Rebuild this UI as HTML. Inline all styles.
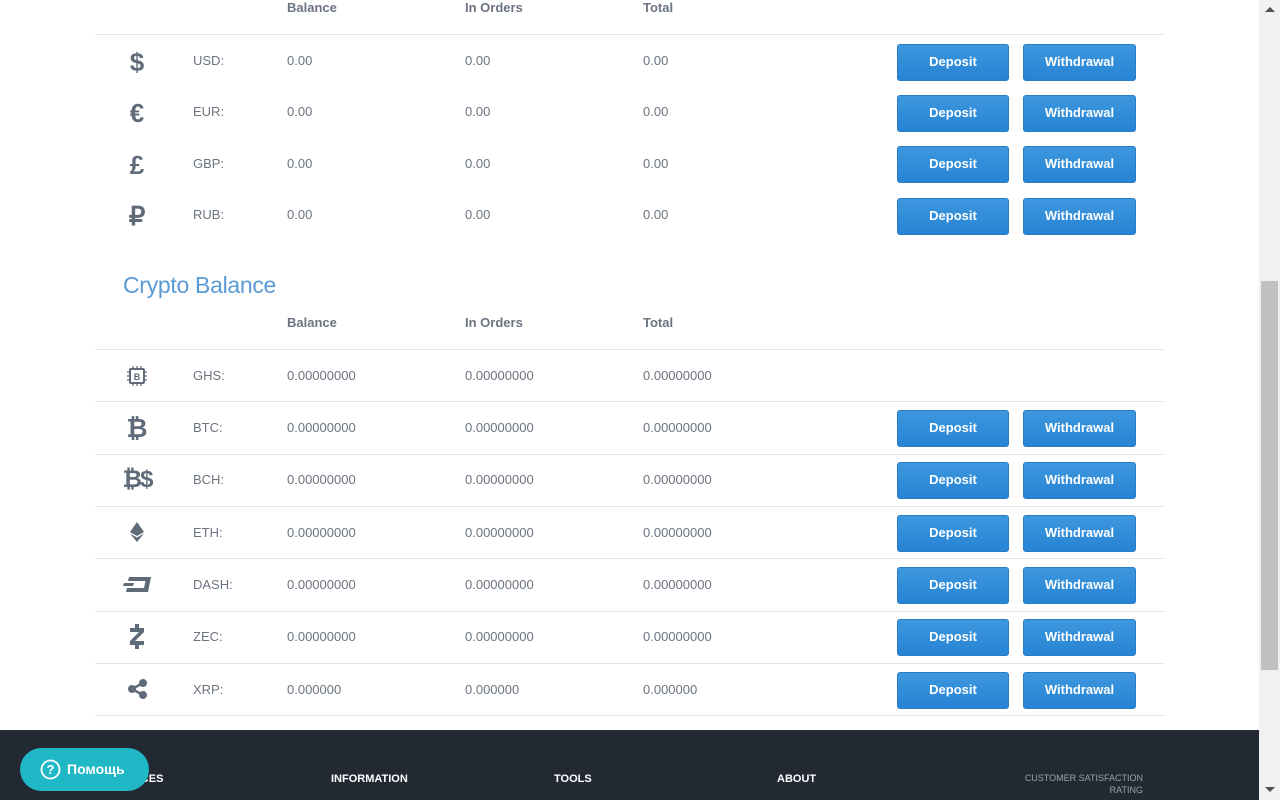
<!DOCTYPE html>
<html><head><meta charset="utf-8"><style>
*{margin:0;padding:0;box-sizing:border-box}
body{width:1280px;height:800px;overflow:hidden;background:#fff;font-family:"Liberation Sans",Arial,sans-serif;position:relative;color:#5b6573}
.t{position:absolute;font-size:13px;color:#6b7480;line-height:16px}
.h{position:absolute;font-size:13px;font-weight:bold;color:#6b7480}
.line{position:absolute;left:95px;width:1069px;height:1px;background:#e2e4e6}
.btn{position:absolute;height:37px;border-radius:3px;background:linear-gradient(#3d98de,#2783d4);border:1px solid #2a7cc4;color:#fff;font-weight:bold;font-size:13px;text-align:center;line-height:34px}
.ic{position:absolute;left:122px;width:30px;text-align:center;color:#5f6b78;font-weight:bold;font-size:26px;line-height:26px}
</style></head><body>
<div class="h" style="left:287px;top:0">Balance</div>
<div class="h" style="left:465px;top:0">In Orders</div>
<div class="h" style="left:643px;top:0">Total</div>
<div class="line" style="top:34px"></div>

<div class="ic" style="top:49px">$</div>
<div class="ic" style="top:100px">€</div>
<div class="ic" style="top:152px">£</div>
<div class="ic" style="top:203px">₽</div>
<div class="t" style="left:193px;top:53px">USD:</div><div class="t" style="left:287px;top:53px">0.00</div><div class="t" style="left:465px;top:53px">0.00</div><div class="t" style="left:643px;top:53px">0.00</div>
<div class="t" style="left:193px;top:104px">EUR:</div><div class="t" style="left:287px;top:104px">0.00</div><div class="t" style="left:465px;top:104px">0.00</div><div class="t" style="left:643px;top:104px">0.00</div>
<div class="t" style="left:193px;top:156px">GBP:</div><div class="t" style="left:287px;top:156px">0.00</div><div class="t" style="left:465px;top:156px">0.00</div><div class="t" style="left:643px;top:156px">0.00</div>
<div class="t" style="left:193px;top:207px">RUB:</div><div class="t" style="left:287px;top:207px">0.00</div><div class="t" style="left:465px;top:207px">0.00</div><div class="t" style="left:643px;top:207px">0.00</div>
<div class="btn" style="left:897px;top:44px;width:112px">Deposit</div><div class="btn" style="left:1023px;top:44px;width:113px">Withdrawal</div>
<div class="btn" style="left:897px;top:95px;width:112px">Deposit</div><div class="btn" style="left:1023px;top:95px;width:113px">Withdrawal</div>
<div class="btn" style="left:897px;top:146px;width:112px">Deposit</div><div class="btn" style="left:1023px;top:146px;width:113px">Withdrawal</div>
<div class="btn" style="left:897px;top:198px;width:112px">Deposit</div><div class="btn" style="left:1023px;top:198px;width:113px">Withdrawal</div>

<div style="position:absolute;left:123px;top:272px;font-size:23px;color:#5a9ad4;letter-spacing:-0.3px">Crypto Balance</div>
<div class="h" style="left:287px;top:315px">Balance</div>
<div class="h" style="left:465px;top:315px">In Orders</div>
<div class="h" style="left:643px;top:315px">Total</div>
<div class="line" style="top:349px"></div>

<svg style="position:absolute;left:126px;top:365px" width="22" height="22" viewBox="0 0 22 22"><rect x="4" y="4" width="14" height="14" rx="1" fill="none" stroke="#5f6b78" stroke-width="2"/><text x="11" y="15" text-anchor="middle" font-size="9" font-weight="bold" fill="#5f6b78" font-family="Liberation Sans">B</text><g stroke="#5f6b78" stroke-width="1.2"><path d="M7 1v2M11 1v2M15 1v2M7 19v2M11 19v2M15 19v2M1 7h2M1 11h2M1 15h2M19 7h2M19 11h2M19 15h2"/></g></svg>
<div class="ic" style="top:415px">₿</div>
<div class="ic" style="top:467px;left:122px;font-size:24px;letter-spacing:-2px">₿$</div>
<svg style="position:absolute;left:130px;top:522px" width="14" height="20" viewBox="0 0 14 20"><path d="M7 0L0 10l7 4 7-4z" fill="#5f6b78"/><path d="M0 11.5l7 8.5 7-8.5-7 4z" fill="#5f6b78"/></svg>
<svg style="position:absolute;left:123px;top:577px" width="29" height="15" viewBox="0 0 29 15"><path d="M6 0h22l-3 15H3l1-4h17l1.5-7H5z" fill="#5f6b78"/><path d="M1 6h10l-1 3H0z" fill="#5f6b78"/></svg>
<svg style="position:absolute;left:129px;top:624px" width="16" height="25" viewBox="0 0 16 25"><path d="M6 0h4v4h5v4L6 17h9v4h-5v4H6v-4H1v-4l9-9H1V4h5z" fill="#5f6b78"/></svg>
<svg style="position:absolute;left:127px;top:678px" width="22" height="22" viewBox="0 0 22 22"><circle cx="16" cy="5" r="4" fill="#5f6b78"/><circle cx="16" cy="17" r="4" fill="#5f6b78"/><circle cx="5" cy="11" r="4" fill="#5f6b78"/><path d="M5 11L16 5M5 11l11 6" stroke="#5f6b78" stroke-width="2.5"/></svg>

<div class="t" style="left:193px;top:368px">GHS:</div><div class="t" style="left:287px;top:368px">0.00000000</div><div class="t" style="left:465px;top:368px">0.00000000</div><div class="t" style="left:643px;top:368px">0.00000000</div>
<div class="line" style="top:401px"></div>
<div class="t" style="left:193px;top:420px">BTC:</div><div class="t" style="left:287px;top:420px">0.00000000</div><div class="t" style="left:465px;top:420px">0.00000000</div><div class="t" style="left:643px;top:420px">0.00000000</div>
<div class="line" style="top:454px"></div>
<div class="t" style="left:193px;top:472px">BCH:</div><div class="t" style="left:287px;top:472px">0.00000000</div><div class="t" style="left:465px;top:472px">0.00000000</div><div class="t" style="left:643px;top:472px">0.00000000</div>
<div class="line" style="top:506px"></div>
<div class="t" style="left:193px;top:525px">ETH:</div><div class="t" style="left:287px;top:525px">0.00000000</div><div class="t" style="left:465px;top:525px">0.00000000</div><div class="t" style="left:643px;top:525px">0.00000000</div>
<div class="line" style="top:558px"></div>
<div class="t" style="left:193px;top:577px">DASH:</div><div class="t" style="left:287px;top:577px">0.00000000</div><div class="t" style="left:465px;top:577px">0.00000000</div><div class="t" style="left:643px;top:577px">0.00000000</div>
<div class="line" style="top:611px"></div>
<div class="t" style="left:193px;top:629px">ZEC:</div><div class="t" style="left:287px;top:629px">0.00000000</div><div class="t" style="left:465px;top:629px">0.00000000</div><div class="t" style="left:643px;top:629px">0.00000000</div>
<div class="line" style="top:663px"></div>
<div class="t" style="left:193px;top:682px">XRP:</div><div class="t" style="left:287px;top:682px">0.000000</div><div class="t" style="left:465px;top:682px">0.000000</div><div class="t" style="left:643px;top:682px">0.000000</div>
<div class="line" style="top:715px"></div>

<div class="btn" style="left:897px;top:410px;width:112px">Deposit</div><div class="btn" style="left:1023px;top:410px;width:113px">Withdrawal</div>
<div class="btn" style="left:897px;top:462px;width:112px">Deposit</div><div class="btn" style="left:1023px;top:462px;width:113px">Withdrawal</div>
<div class="btn" style="left:897px;top:515px;width:112px">Deposit</div><div class="btn" style="left:1023px;top:515px;width:113px">Withdrawal</div>
<div class="btn" style="left:897px;top:567px;width:112px">Deposit</div><div class="btn" style="left:1023px;top:567px;width:113px">Withdrawal</div>
<div class="btn" style="left:897px;top:619px;width:112px">Deposit</div><div class="btn" style="left:1023px;top:619px;width:113px">Withdrawal</div>
<div class="btn" style="left:897px;top:672px;width:112px">Deposit</div><div class="btn" style="left:1023px;top:672px;width:113px">Withdrawal</div>

<div style="position:absolute;left:0;top:730px;width:1259px;height:70px;background:#232933"></div>
<div style="position:absolute;left:108px;top:773px;color:#fff;font-size:11px;font-weight:bold">SERVICES</div>
<div style="position:absolute;left:331px;top:773px;color:#fff;font-size:11px;font-weight:bold">INFORMATION</div>
<div style="position:absolute;left:554px;top:773px;color:#fff;font-size:11px;font-weight:bold">TOOLS</div>
<div style="position:absolute;left:777px;top:773px;color:#fff;font-size:11px;font-weight:bold">ABOUT</div>
<div style="position:absolute;left:1000px;top:772px;width:143px;text-align:right;color:#9aa3ad;font-size:9px;line-height:12px">CUSTOMER SATISFACTION<br>RATING</div>
<div style="position:absolute;left:20px;top:748px;width:129px;height:43px;border-radius:22px;background:#20b8c6;color:#fff;font-weight:bold;font-size:14px;line-height:43px">
<svg style="position:absolute;left:20px;top:11px" width="21" height="21" viewBox="0 0 21 21"><circle cx="10.5" cy="10.5" r="9" fill="none" stroke="#fff" stroke-width="1.8"/><text x="10.5" y="15" text-anchor="middle" font-size="13" font-weight="bold" fill="#fff" font-family="Liberation Sans">?</text></svg>
<span style="position:absolute;left:47px">Помощь</span></div>

<div style="position:absolute;left:1259px;top:0;width:21px;height:800px;background:#f1f1f1"></div>
<div style="position:absolute;left:1261px;top:281px;width:17px;height:389px;background:#c1c1c1"></div>
<div style="position:absolute;left:1265px;top:7px;width:0;height:0;border-left:5px solid transparent;border-right:5px solid transparent;border-bottom:5px solid #505050"></div>
<div style="position:absolute;left:1265px;top:787px;width:0;height:0;border-left:5px solid transparent;border-right:5px solid transparent;border-top:5px solid #505050"></div>
</body></html>
